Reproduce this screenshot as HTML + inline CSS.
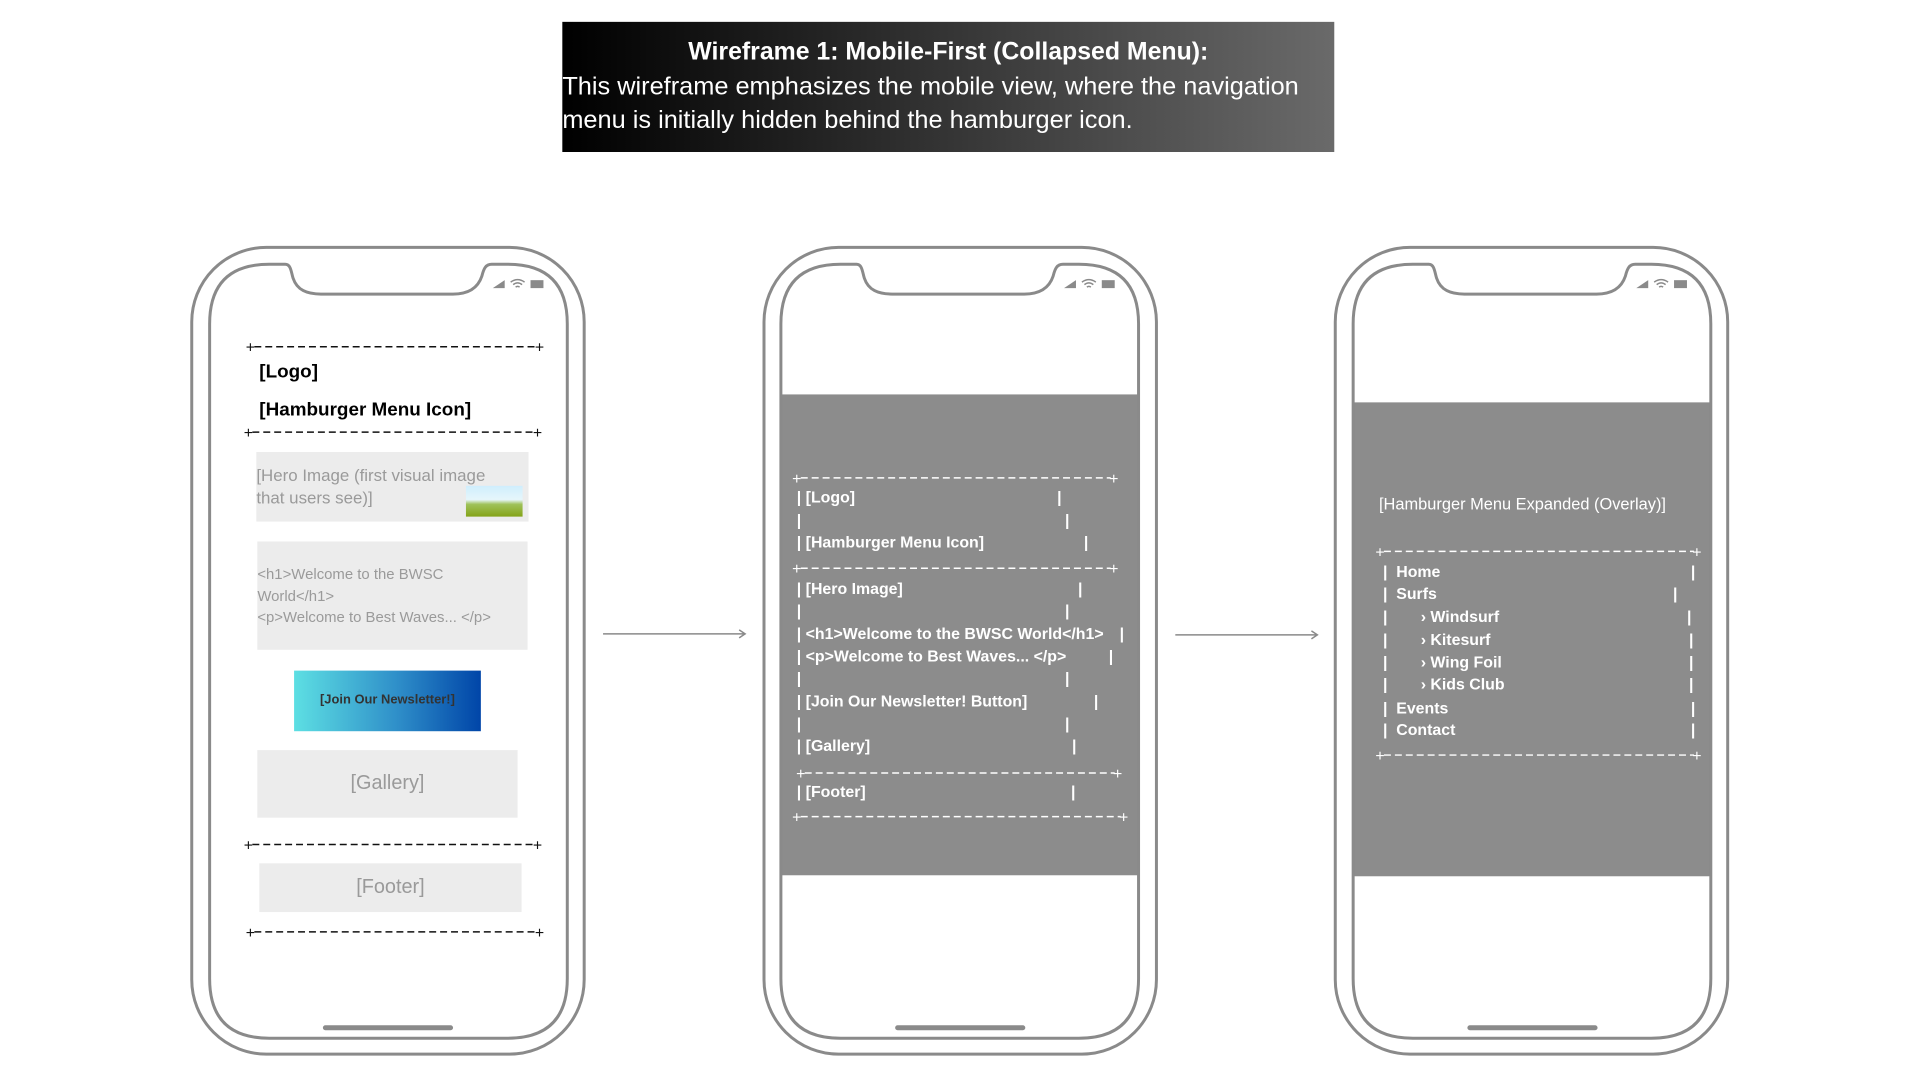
<!DOCTYPE html>
<html><head><meta charset="utf-8"><style>
*{margin:0;padding:0;box-sizing:border-box}
body{width:1920px;height:1080px;background:#fff;position:relative;overflow:hidden;font-family:"Liberation Sans",sans-serif}
#wrap{position:absolute;left:0;top:0;width:1920px;height:1080px;transform:scale(0.9935);transform-origin:0 0}
.t{position:absolute;white-space:nowrap;line-height:1}
#title{position:absolute;left:566px;top:22px;width:777px;height:131px;background:linear-gradient(90deg,#000 0%,#2a2a2a 40%,#6a6a6a 100%);color:#fff}
.w{color:#fff;font-weight:bold;font-size:16px}
.g{color:#9a9a9a}
</style></head><body><div id="wrap">
<div id="title">
<div class="t" style="left:0;width:777px;text-align:center;top:18px;font-size:25px;font-weight:bold">Wireframe 1: Mobile-First (Collapsed Menu):</div>
<div class="t" style="left:0;top:53px;font-size:25.5px">This wireframe emphasizes the mobile view, where the navigation</div>
<div class="t" style="left:0;top:87px;font-size:25.5px">menu is initially hidden behind the hamburger icon.</div>
</div>

<svg width="1920" height="1080" style="position:absolute;left:0;top:0">
<defs>
<path id="inner" d="M60 0 L76 0 C82 0 82 8 84 14 C88 26 98 30 112 30 L245 30 C260 30 270 24 274 12 C276 4 278 0 284 0 L300 0 Q360 0 360 60 L360 719 Q360 779 300 779 L60 779 Q0 779 0 719 L0 60 Q0 0 60 0 Z"/>
<clipPath id="cl"><use href="#inner"/></clipPath>
<g id="status">
<path d="M0 10 L12 2 L12 10 Z" fill="#8a8a8a"/>
<path d="M18 4 Q25 -1 32 4 M20.5 6.5 Q25 3 29.5 6.5 M23 9 Q25 7.5 27 9" stroke="#8a8a8a" stroke-width="1.5" fill="none"/>
<rect x="38" y="2" width="13" height="8" fill="#8a8a8a"/>
</g>
</defs>
<rect x="193" y="249" width="395" height="812" rx="75" fill="none" stroke="#8a8a8a" stroke-width="3"/>
<g transform="translate(211,266)"><use href="#inner" fill="none" stroke="#8a8a8a" stroke-width="3"/></g>
<use href="#status" x="496" y="280"/>
<rect x="325" y="1032" width="131" height="5" rx="2.5" fill="#8a8a8a"/>
<rect x="769" y="249" width="395" height="812" rx="75" fill="none" stroke="#8a8a8a" stroke-width="3"/>
<g transform="translate(786,266)"><g clip-path="url(#cl)"><rect x="0" y="131" width="360" height="484" fill="#8c8c8c"/></g><use href="#inner" fill="none" stroke="#8a8a8a" stroke-width="3"/></g>
<use href="#status" x="1071" y="280"/>
<rect x="901" y="1032" width="131" height="5" rx="2.5" fill="#8a8a8a"/>
<rect x="1344" y="249" width="395" height="812" rx="75" fill="none" stroke="#8a8a8a" stroke-width="3"/>
<g transform="translate(1362,266)"><g clip-path="url(#cl)"><rect x="0" y="139" width="360" height="477" fill="#8c8c8c"/></g><use href="#inner" fill="none" stroke="#8a8a8a" stroke-width="3"/></g>
<use href="#status" x="1647" y="280"/>
<rect x="1477" y="1032" width="131" height="5" rx="2.5" fill="#8a8a8a"/>
<g stroke="#8a8a8a" stroke-width="1.5" fill="none">
<path d="M607 638 L750 638 M744 634 L750 638 L744 642"/>
<path d="M1183 639 L1326 639 M1320 635 L1326 639 L1320 643"/>
</g>
<g stroke-dasharray="7 4" stroke-width="1.5">
<line x1="256" y1="349" x2="540" y2="349" stroke="#111"/>
<line x1="254" y1="435" x2="538" y2="435" stroke="#111"/>
<line x1="254" y1="850" x2="538" y2="850" stroke="#111"/>
<line x1="256" y1="938" x2="540" y2="938" stroke="#111"/>
<line x1="806" y1="481" x2="1118" y2="481" stroke="#fff"/>
<line x1="806" y1="572" x2="1118" y2="572" stroke="#fff"/>
<line x1="810" y1="778" x2="1122" y2="778" stroke="#fff"/>
<line x1="806" y1="822" x2="1128" y2="822" stroke="#fff"/>
<line x1="1393" y1="555" x2="1705" y2="555" stroke="#fff"/>
<line x1="1393" y1="760" x2="1705" y2="760" stroke="#fff"/>
</g>
<g font-family="Liberation Sans" font-size="16" text-anchor="middle">
<text x="252" y="355" fill="#111">+</text><text x="543" y="355" fill="#111">+</text>
<text x="250" y="441" fill="#111">+</text><text x="541" y="441" fill="#111">+</text>
<text x="250" y="856" fill="#111">+</text><text x="541" y="856" fill="#111">+</text>
<text x="252" y="944" fill="#111">+</text><text x="543" y="944" fill="#111">+</text>
<text x="802" y="487" fill="#fff">+</text><text x="1121" y="487" fill="#fff">+</text>
<text x="802" y="578" fill="#fff">+</text><text x="1121" y="578" fill="#fff">+</text>
<text x="806" y="784" fill="#fff">+</text><text x="1125" y="784" fill="#fff">+</text>
<text x="802" y="828" fill="#fff">+</text><text x="1131" y="828" fill="#fff">+</text>
<text x="1389" y="561" fill="#fff">+</text><text x="1708" y="561" fill="#fff">+</text>
<text x="1389" y="766" fill="#fff">+</text><text x="1708" y="766" fill="#fff">+</text>
</g>
</svg>

<div class="t" style="left:261px;top:365px;font-size:19px;font-weight:bold;color:#000">[Logo]</div>
<div class="t" style="left:261px;top:403px;font-size:19px;font-weight:bold;color:#000">[Hamburger Menu Icon]</div>
<div style="position:absolute;left:258px;top:455px;width:274px;height:70px;background:#ececec"></div>
<div class="t g" style="left:258px;top:467px;font-size:17px;line-height:23px">[Hero Image (first visual image<br>that users see)]</div>
<div style="position:absolute;left:469px;top:489px;width:57px;height:31px;background:linear-gradient(#cfeefd,#e6f6fb 45%,#9fc25a 60%,#84a318)"></div>
<div style="position:absolute;left:259px;top:545px;width:272px;height:109px;background:#ececec"></div>
<div class="t g" style="left:259px;top:568px;font-size:15px;line-height:21.5px">&lt;h1&gt;Welcome to the BWSC<br>World&lt;/h1&gt;<br>&lt;p&gt;Welcome to Best Waves... &lt;/p&gt;</div>
<div style="position:absolute;left:296px;top:675px;width:188px;height:61px;background:linear-gradient(90deg,#5ddfe3,#2f8fc9 55%,#0045a8)"></div>
<div class="t" style="left:296px;top:697px;width:188px;text-align:center;font-size:13px;font-weight:bold;color:#333">[Join Our Newsletter!]</div>
<div style="position:absolute;left:259px;top:755px;width:262px;height:68px;background:#ececec"></div>
<div class="t g" style="left:259px;top:778px;width:262px;text-align:center;font-size:20px">[Gallery]</div>
<div style="position:absolute;left:261px;top:869px;width:264px;height:49px;background:#ececec"></div>
<div class="t g" style="left:261px;top:883px;width:264px;text-align:center;font-size:20px">[Footer]</div>

<div class="t w" style="left:802px;top:494px">| [Logo]</div><div class="t w" style="left:1064px;top:494px">|</div>
<div class="t w" style="left:802px;top:517px">|</div><div class="t w" style="left:1072px;top:517px">|</div>
<div class="t w" style="left:802px;top:539px">| [Hamburger Menu Icon]</div><div class="t w" style="left:1091px;top:539px">|</div>
<div class="t w" style="left:802px;top:586px">| [Hero Image]</div><div class="t w" style="left:1085px;top:586px">|</div>
<div class="t w" style="left:802px;top:608px">|</div><div class="t w" style="left:1072px;top:608px">|</div>
<div class="t w" style="left:802px;top:631px">| &lt;h1&gt;Welcome to the BWSC World&lt;/h1&gt;</div><div class="t w" style="left:1127px;top:631px">|</div>
<div class="t w" style="left:802px;top:654px">| &lt;p&gt;Welcome to Best Waves... &lt;/p&gt;</div><div class="t w" style="left:1116px;top:654px">|</div>
<div class="t w" style="left:802px;top:676px">|</div><div class="t w" style="left:1072px;top:676px">|</div>
<div class="t w" style="left:802px;top:699px">| [Join Our Newsletter! Button]</div><div class="t w" style="left:1101px;top:699px">|</div>
<div class="t w" style="left:802px;top:722px">|</div><div class="t w" style="left:1072px;top:722px">|</div>
<div class="t w" style="left:802px;top:744px">| [Gallery]</div><div class="t w" style="left:1079px;top:744px">|</div>
<div class="t w" style="left:802px;top:790px">| [Footer]</div><div class="t w" style="left:1078px;top:790px">|</div>

<div class="t" style="left:1388px;top:500px;font-size:16.5px;color:#fff">[Hamburger Menu Expanded (Overlay)]</div>
<div class="t w" style="left:1392px;top:569px">|&nbsp;&nbsp;Home</div><div class="t w" style="left:1702px;top:569px">|</div>
<div class="t w" style="left:1392px;top:591px">|&nbsp;&nbsp;Surfs</div><div class="t w" style="left:1684px;top:591px">|</div>
<div class="t w" style="left:1392px;top:614px">|</div><div class="t w" style="left:1430px;top:614px">› Windsurf</div><div class="t w" style="left:1698px;top:614px">|</div>
<div class="t w" style="left:1392px;top:637px">|</div><div class="t w" style="left:1430px;top:637px">› Kitesurf</div><div class="t w" style="left:1700px;top:637px">|</div>
<div class="t w" style="left:1392px;top:660px">|</div><div class="t w" style="left:1430px;top:660px">› Wing Foil</div><div class="t w" style="left:1700px;top:660px">|</div>
<div class="t w" style="left:1392px;top:682px">|</div><div class="t w" style="left:1430px;top:682px">› Kids Club</div><div class="t w" style="left:1700px;top:682px">|</div>
<div class="t w" style="left:1392px;top:706px">|&nbsp;&nbsp;Events</div><div class="t w" style="left:1702px;top:706px">|</div>
<div class="t w" style="left:1392px;top:728px">|&nbsp;&nbsp;Contact</div><div class="t w" style="left:1702px;top:728px">|</div>
</div></body></html>
